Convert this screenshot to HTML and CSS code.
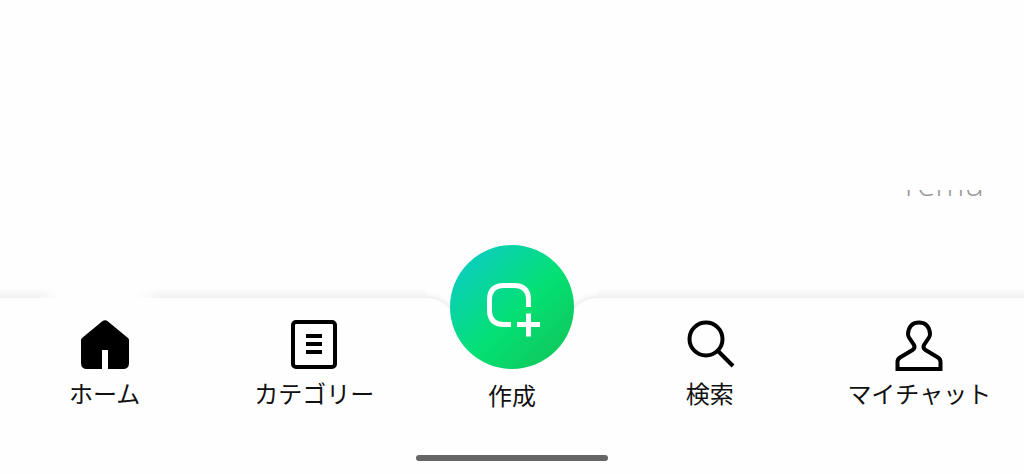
FILE: index.html
```html
<!DOCTYPE html>
<html lang="ja">
<head>
  <meta charset="UTF-8">
  <meta name="viewport" content="width=device-width, initial-scale=1.0">
  <title>ホーム</title>
  <link rel="stylesheet" href="styles.css">
</head>
<body>
  <div class="screen">
    <main class="content">
      <p class="ad-caption"><span>Temu</span></p>
    </main>

    <footer class="tab-bar">
      <div class="bar-edge">
        <div class="edge edge-left"></div>
        <svg class="notch" viewBox="0 0 172 40" aria-hidden="true">
          <defs>
            <filter id="soft" x="-10%" y="-50%" width="120%" height="200%">
              <feGaussianBlur stdDeviation="3"/>
            </filter>
            <clipPath id="above">
              <path d="M0 0H172V10C160 10 152 15 146 24L140 40H32L26 24C20 15 12 10 0 10Z"/>
            </clipPath>
          </defs>
          <g clip-path="url(#above)">
            <path d="M-10 13H0C12 13 20 18 26 27L32 43M182 13H172C160 13 152 18 146 27L140 43" fill="none" stroke="#000" stroke-opacity=".1" stroke-width="7" filter="url(#soft)"/>
          </g>
        </svg>
        <div class="edge"></div>
      </div>

      <nav class="tabs">
        <a class="tab" href="#home">
          <svg class="icon" viewBox="0 0 50 50" aria-hidden="true">
            <path d="M22 1.500Q25 -1 28 1.500L48 18Q49 19 49 20V43Q49 49 43 49H28V30H22V49H7Q1 49 1 43V20Q1 19 2 18Z"/>
          </svg>
          <span class="label">ホーム</span>
        </a>
        <a class="tab" href="#category">
          <svg class="icon" viewBox="0 0 50 50" aria-hidden="true">
            <rect x="4" y="2" width="42" height="45" rx="3" fill="none" stroke="#000" stroke-width="4"/>
            <path d="M17 16H33M17 24H33M17 32H33" stroke="#000" stroke-width="4"/>
          </svg>
          <span class="label">カテゴリー</span>
        </a>
        <a class="tab tab-create" href="#create">
          <span class="create-button">
            <svg class="create-icon" viewBox="0 0 124 124" aria-hidden="true">
              <path d="M61 79.500H54Q39.500 79.500 39.500 65V55Q39.500 40.500 54 40.500H64Q78.500 40.500 78.500 55V62M78.500 68.500V91.500M67 79.500H90" fill="none" stroke="#fff" stroke-width="5"/>
            </svg>
          </span>
          <span class="label">作成</span>
        </a>
        <a class="tab" href="#search">
          <svg class="icon" viewBox="0 0 50 50" aria-hidden="true">
            <circle cx="21" cy="19" r="16.500" fill="none" stroke="#000" stroke-width="4"/>
            <path d="M33 31L48 46" stroke="#000" stroke-width="4"/>
          </svg>
          <span class="label">検索</span>
        </a>
        <a class="tab" href="#mychat">
          <svg class="icon" viewBox="0 0 50 50" aria-hidden="true">
            <path d="M3.500 49V42Q3.500 39 6 37.500L18.500 30Q21.500 28 20 25L15 17.500Q14 16 14 14C14.500 6 19 2.500 25 2.500S35.500 6 36 14Q36 16 35 17.500L30 25Q28.500 28 31.500 30L44 37.500Q46.500 39 46.500 42V49Z" fill="none" stroke="#000" stroke-width="4"/>
          </svg>
          <span class="label">マイチャット</span>
        </a>
      </nav>

      <div class="home-indicator"></div>
    </footer>
  </div>
</body>
</html>
```
FILE: styles.css
```css
* {
  box-sizing: border-box;
  margin: 0;
  padding: 0;
}

body {
  background: #fefefe;
  color: #111;
  font-family: 'Noto Sans CJK JP', sans-serif;
}

.screen {
  min-height: 100vh;
  display: flex;
  flex-direction: column;
}

.content {
  flex: 1;
  display: flex;
  flex-direction: column;
  justify-content: flex-end;
  align-items: flex-end;
  padding: 0 40px 100px;
}

/* Only the foot of the caption shows below the banner */
.ad-caption {
  display: flex;
  align-items: flex-end;
  height: 8px;
  overflow: hidden;
  color: #999;
  font-family: 'Open Sans', sans-serif;
  font-size: 33px;
  font-weight: 300;
  line-height: 28px;
}

.tab-bar {
  position: relative;
  background: #fefefe;
  padding-bottom: 13px;
}

/* Soft shadow along the top, dipping around the create button */
.bar-edge {
  position: absolute;
  top: -10px;
  left: 0;
  right: 0;
  display: flex;
}

.edge {
  flex: 1;
  height: 10px;
  background: linear-gradient(to bottom, #fefefe, #f1f1f1);
}

.edge-left {
  background:
    linear-gradient(to right, transparent 36px, #fefefe 60px, #fefefe 136px, transparent 164px),
    linear-gradient(to bottom, #fefefe, #f1f1f1);
}

.notch {
  width: 172px;
  height: 40px;
}

.tabs {
  position: relative;
  display: grid;
  grid-template-columns: 9fr 9fr 8fr 9fr 9fr;
  align-items: start;
}

.tab {
  display: flex;
  flex-direction: column;
  align-items: center;
  gap: 9px;
  padding-top: 22px;
  color: inherit;
  text-decoration: none;
}

.tab-create {
  gap: 12px;
  margin-top: -53px;
  padding-top: 0;
}

.icon {
  width: 50px;
  height: 50px;
  overflow: visible;
}

.label {
  font-size: 24px;
  line-height: 28px;
  white-space: nowrap;
}

.create-button {
  width: 124px;
  height: 124px;
  border-radius: 50%;
  background: linear-gradient(135deg, #0cccc4 8%, #04e074 54%, #10c85c 90%);
}

.create-icon {
  display: block;
}

.home-indicator {
  width: 192px;
  height: 6px;
  margin: 46px auto 0;
  border-radius: 3px;
  background: #666;
}
```
